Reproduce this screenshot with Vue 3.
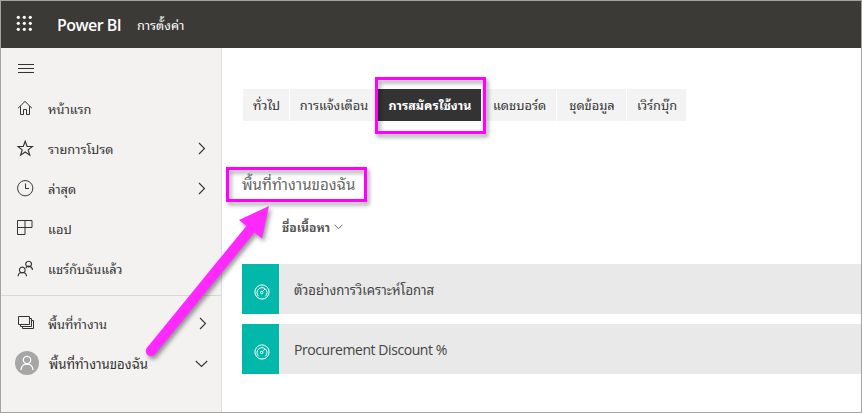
<script setup>
const nav = [
  { icon: 'home', label: 'หน้าแรก' },
  { icon: 'star', label: 'รายการโปรด', chevron: 'right' },
  { icon: 'clock', label: 'ล่าสุด', chevron: 'right' },
  { icon: 'apps', label: 'แอป' },
  { icon: 'people', label: 'แชร์กับฉันแล้ว' },
]
const spaces = [
  { icon: 'stack', label: 'พื้นที่ทำงาน', chevron: 'right' },
  { icon: 'user', label: 'พื้นที่ทำงานของฉัน', chevron: 'down' },
]
const tabs = [
  { label: 'ทั่วไป', width: 46 },
  { label: 'การแจ้งเตือน', width: 87 },
  { label: 'การสมัครใช้งาน', width: 103, active: true },
  { label: 'แดชบอร์ด', width: 74 },
  { label: 'ชุดข้อมูล', width: 69 },
  { label: 'เวิร์กบุ๊ก', width: 59 },
]
const rows = [
  { text: 'ตัวอย่างการวิเคราะห์โอกาส', script: 'thai' },
  { text: 'Procurement Discount %', script: 'latin' },
]
const paths = {
  home: 'M1 8.3 8 1.4 15 8.3M3.5 6.2V14.5H6.5V9.5H9.5V14.5H12.5V6.2',
  star: 'M8.2 1.2 10.1 6.5H15.5L11.2 9.9 12.8 15.2 8.2 12 3.6 15.2 5.2 9.9.9 6.5H6.3Z',
  clock: 'M8.2.6a7.6 7.6 0 1 0 .01 0M8.5 3.5V8.5H12',
  apps: 'M.5 .5H15V7.5H.5ZM8 .5V14.5H.5V7.5',
  people: 'M5.3 7.1a2.9 2.9 0 1 0 .01 0M1.1 16.3c.1-5.1 8.3-5.1 8.4 0M11.6 1.2a2.9 2.9 0 1 0 .01 0M8.9 7.9c1.7-2.9 6.2-1.9 6.6 2',
}
</script>

<template>
  <div class="window">
    <header class="topbar">
      <svg class="waffle" width="17" height="17" viewBox="0 0 17 17">
        <template v-for="y in 3" :key="y">
          <circle v-for="x in 3" :key="x" :cx="x * 6 - 3.7" :cy="y * 6 - 3.7" r="1.6" />
        </template>
      </svg>
      <span class="brand">Power BI</span>
      <span class="page-name">การตั้งค่า</span>
    </header>
    <div class="body">
      <aside class="sidebar">
        <svg class="burger" width="16" height="10" viewBox="0 0 16 10"><path d="M0 .5H16M0 4.5H16M0 8.5H16" /></svg>
        <nav class="nav">
          <a v-for="item in nav" :key="item.icon" class="item">
            <svg class="icon" :class="{ bold: item.icon === 'star' || item.icon === 'people' }" width="17" height="17" viewBox="0 0 17 17"><path :d="paths[item.icon]" /></svg>
            <span class="label">{{ item.label }}</span>
            <svg v-if="item.chevron" class="chevron" width="8" height="13" viewBox="0 0 8 13"><path d="M1 1 6.5 6.5 1 12" /></svg>
          </a>
        </nav>
        <nav class="spaces">
          <a v-for="item in spaces" :key="item.icon" class="item" :class="item.icon">
            <svg v-if="item.icon === 'stack'" class="icon" width="17" height="14" viewBox="0 0 17 14">
              <path d="M1.5.5H12.5V8.5H1.5ZM3.5 8.5V10.5H14.5V2.5H12.5M5.5 10.5V12.5H16.5V4.5H14.5" />
            </svg>
            <svg v-else class="avatar" width="24" height="24" viewBox="0 0 24 24">
              <circle cx="12" cy="12" r="12" fill="#a6a6a6" />
              <circle cx="12" cy="9" r="3.7" />
              <path d="M6 19c.3-8 11.7-8 12 0" />
            </svg>
            <span class="label">{{ item.label }}</span>
            <svg v-if="item.chevron === 'right'" class="chevron" width="8" height="13" viewBox="0 0 8 13"><path d="M1 1 6.5 6.5 1 12" /></svg>
            <svg v-else class="chevron" width="13" height="8" viewBox="0 0 13 8"><path d="M.8 1 6.5 6.5 12.2 1" /></svg>
          </a>
        </nav>
      </aside>
      <main class="content">
        <div class="tabs">
          <div v-for="tab in tabs" :key="tab.label" class="tab" :class="{ active: tab.active }" :style="{ width: tab.width + 'px' }">
            <span>{{ tab.label }}</span>
          </div>
        </div>
        <h1 class="heading">พื้นที่ทำงานของฉัน</h1>
        <div class="column-head">
          <span>ชื่อเนื้อหา</span>
          <svg width="9" height="6" viewBox="0 0 9 6"><path d="M.5.7 4.5 4.7 8.5.7" /></svg>
        </div>
        <div class="list">
          <div v-for="row in rows" :key="row.text" class="row">
            <div class="tile">
              <svg width="16" height="16" viewBox="0 0 16 16">
                <circle cx="8" cy="8" r="7.1" />
                <path d="M4.6 12.3A5 5 0 1 1 11.4 12.3M8.4 7.6 11 5" />
                <circle cx="7.6" cy="8.5" r="1.2" />
              </svg>
            </div>
            <span class="row-text" :class="row.script">{{ row.text }}</span>
          </div>
        </div>
      </main>
    </div>
    <div class="mark mark-tab"></div>
    <div class="mark mark-heading"></div>
    <svg class="arrow" width="862" height="413" viewBox="0 0 862 413">
      <path d="M151 351 249 231" stroke="#ff29ff" stroke-width="10.5" stroke-linecap="round" />
      <path d="M269 206 239 220 262 238.5Z" fill="#ff29ff" />
    </svg>
  </div>
</template>

<style>
body { margin: 0; }
</style>

<style scoped>
.window {
  position: relative;
  box-sizing: border-box;
  width: 862px;
  height: 413px;
  border: 1px solid #a3a3a3;
  overflow: hidden;
  background: #fff;
  color: #333;
  font-family: "Leelawadee UI", "Noto Sans Thai Looped", Loma, Waree, Garuda, "Noto Sans", "Open Sans", sans-serif;
  font-size: 12.9px;
}
svg { display: block; flex: none; fill: none; stroke: #333; stroke-width: 1; }
span { white-space: nowrap; }
.topbar { display: flex; align-items: center; height: 47px; background: #3b3a37; color: #fff; }
.waffle { margin: -2px 0 0 15px; fill: #fff; stroke: none; }
.brand { margin-left: 24px; font: 600 16px/24px "Open Sans", sans-serif; letter-spacing: -0.55px; }
.page-name { margin: -2px 0 0 16px; font-size: 12.8px; }
.body { display: flex; height: 364px; }
.sidebar { box-sizing: border-box; width: 221px; padding-top: 16px; background: #f3f2f1; border-right: 1px solid #dfdfdf; }
.burger { margin-left: 17px; }
.nav { padding: 15px 0 6px; border-bottom: 1px solid #d9d8d7; }
.item { display: flex; align-items: center; height: 40px; }
.icon { margin: -2px 0 0 16px; }
.icon.bold { stroke-width: 1.15; }
.label { flex: 1; margin: -3px 0 0 14px; font-size: 12.8px; }
.chevron { margin-right: 15px; stroke-width: 1.1; }
.nav .chevron { margin-top: -2px; }
.spaces { padding-top: 8px; }
.spaces .chevron { margin: -1px 14px 0 0; }
.avatar { margin: -2px 0 0 14px; stroke: #fff; stroke-width: 1.3; }
.avatar circle:first-child { stroke: none; }
.user .label { margin: -2px 0 0 10px; font-size: 13.2px; }
.spaces .user .chevron { margin-right: 13px; }
.content { flex: 1; padding: 41px 0 0 20px; }
.tabs { display: flex; gap: 1px; margin-left: 1px; }
.tab { display: flex; align-items: center; justify-content: center; height: 32px; background: #f3f3f3; }
.tab span { margin: -3px 0 0 1px; font-size: 12.8px; }
.tab.active { background: #333; color: #fff; font-weight: 700; }
.tab.active span { font-size: 12.5px; }
.heading { margin: 50px 0 0; height: 26px; font-size: 15.1px; line-height: 24px; font-weight: 400; color: #666; white-space: nowrap; }
.column-head { display: flex; align-items: center; gap: 4px; height: 20px; margin: 20px 0 0 40px; font-size: 12.2px; font-weight: 700; color: #555; }
.column-head span { margin-top: -2px; }
.column-head svg { stroke: #666; }
.list { display: grid; gap: 10px; margin-top: 27px; }
.row { display: flex; align-items: center; height: 50px; background: #e9e9e9; }
.tile { display: flex; align-items: center; justify-content: center; width: 37px; height: 50px; padding: 0 0 0 2px; box-sizing: border-box; background: #01b8aa; }
.tile svg { stroke: #fff; margin-top: 6px; }
.row-text { margin-left: 15px; color: #444; }
.thai { font-size: 13.1px; }
.latin { margin-top: 2px; font: 14px/20px "Open Sans", sans-serif; letter-spacing: -0.43px; }
.mark { position: absolute; box-sizing: border-box; border: 3px solid #f0f; filter: drop-shadow(2px 3px 2px rgba(0, 0, 0, 0.4)); }
.mark-tab { left: 374px; top: 76px; width: 111px; height: 57px; }
.mark-heading { left: 225px; top: 166px; width: 141px; height: 35px; }
.arrow { position: absolute; left: -1px; top: -1px; stroke: none; filter: drop-shadow(2px 3px 2px rgba(0, 0, 0, 0.4)); }
</style>
